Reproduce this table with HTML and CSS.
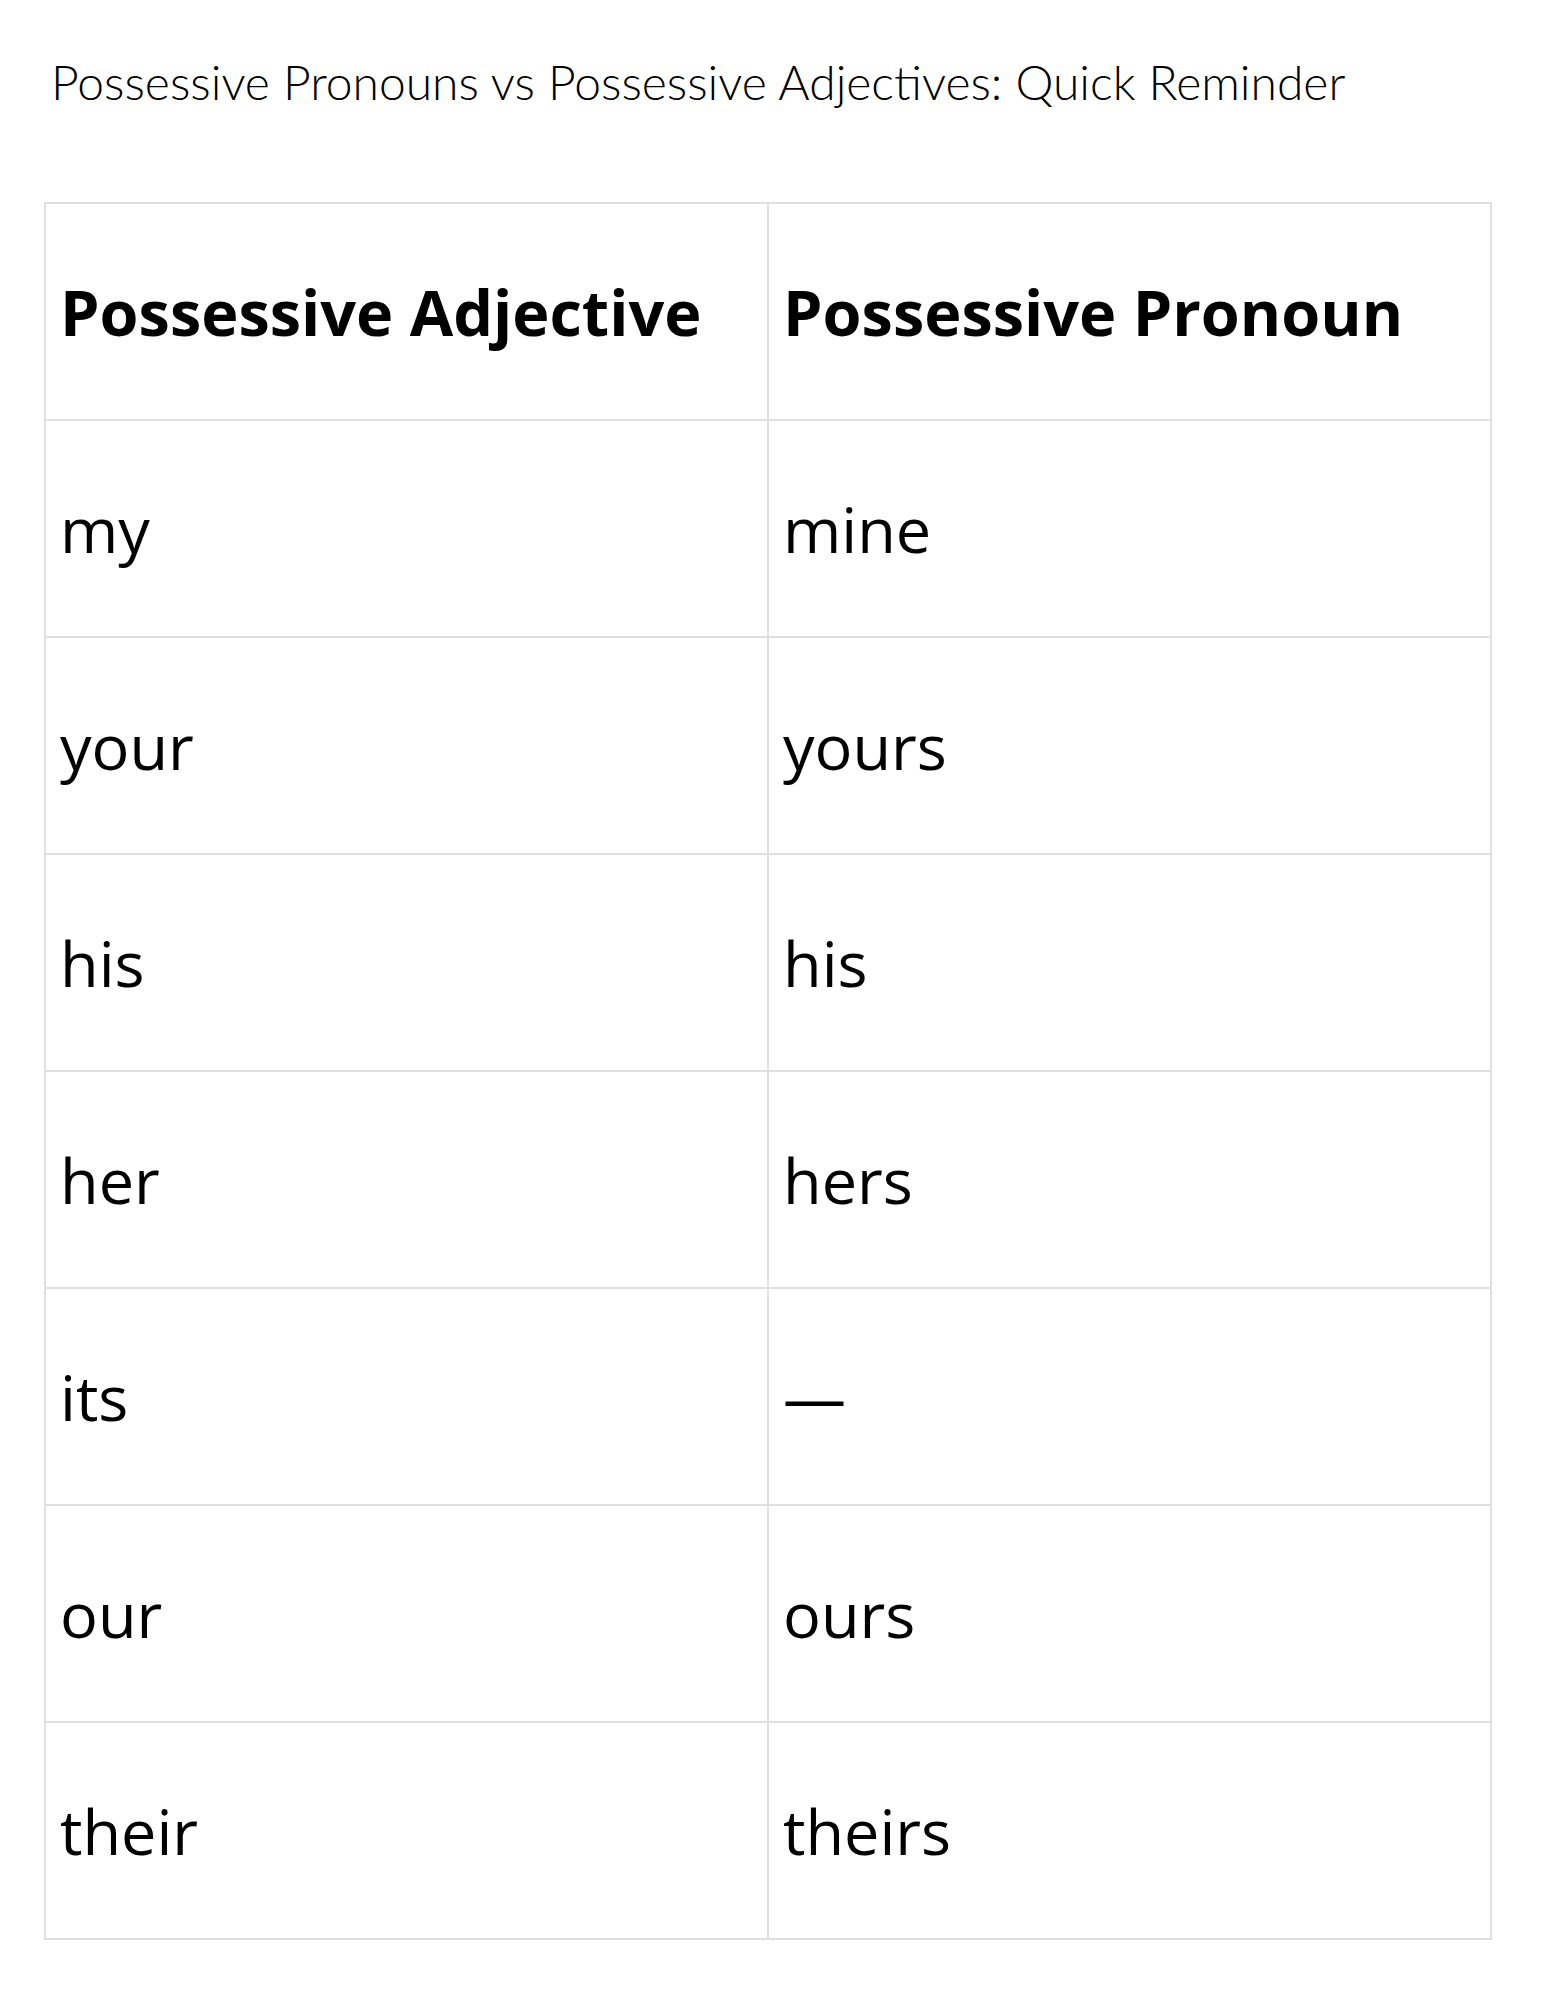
FILE: index.html
```html
<!DOCTYPE html>
<html lang="en">
<head>
<meta charset="utf-8">
<title>Possessive Pronouns vs Possessive Adjectives</title>
<link rel="stylesheet" href="styles.css">
</head>
<body>
<main class="page">
  <h1 class="title">Possessive Pronouns vs Possessive Adjectives: Quick Reminder</h1>
  <table class="grid">
    <thead>
      <tr><th>Possessive Adjective</th><th>Possessive Pronoun</th></tr>
    </thead>
    <tbody>
      <tr><td>my</td><td>mine</td></tr>
      <tr><td>your</td><td>yours</td></tr>
      <tr><td>his</td><td>his</td></tr>
      <tr><td>her</td><td>hers</td></tr>
      <tr><td>its</td><td>—</td></tr>
      <tr><td>our</td><td>ours</td></tr>
      <tr><td>their</td><td>theirs</td></tr>
    </tbody>
  </table>
</main>
</body>
</html>
```

FILE: styles.css
```css
html, body {
  margin: 0;
  padding: 0;
  background: #ffffff;
}

.page {
  padding: 52px 0 0 44px;
  width: 1448px;
}

.title {
  margin: 0 0 0 7px;
  font-family: "Lato", "Liberation Sans", sans-serif;
  font-weight: 300;
  font-size: 48px;
  line-height: 60px;
  color: #000;
}

.grid {
  margin-top: 90px;
  width: 1448px;
  border-collapse: collapse;
  table-layout: fixed;
  font-family: "Open Sans", "Noto Sans", sans-serif;
  color: #000;
}

.grid th,
.grid td {
  border: 2px solid #e0e0e0;
  height: 215px;
  padding: 0 14px;
  text-align: left;
  vertical-align: middle;
  font-size: 63px;
  line-height: 80px;
}

.grid th {
  font-weight: 700;
}

.grid td {
  font-weight: 400;
}
```
